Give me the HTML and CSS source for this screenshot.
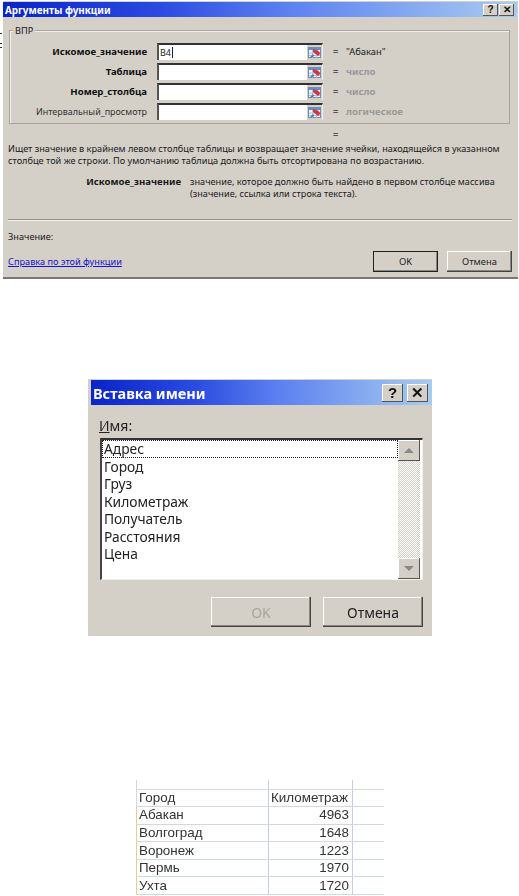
FILE: index.html
```html
<!DOCTYPE html>
<html lang="ru">
<head>
<meta charset="utf-8">
<title>Аргументы функции</title>
<link rel="stylesheet" href="styles.css">
</head>
<body>
<svg class="defs" width="0" height="0" aria-hidden="true">
  <symbol id="ref" viewBox="0 0 15 15">
    <rect x="0" y="0" width="15" height="15" fill="#d4d0c8"/>
    <rect x="1.5" y="2.5" width="12" height="10" fill="#eef4fa" stroke="#6f8fb5"/>
    <rect x="2" y="3" width="11" height="2" fill="#5f8fd0"/>
    <path d="M2 8h11M2 10.5h11M5.5 5v8M9.5 5v8" stroke="#a8c4dc" fill="none"/>
    <path d="M6 4l5 1.5 2.5 3-2.5 2.500-5-4z" fill="#d8363c"/>
    <path d="M3 12l3-3 1.500 1.500-2.500 2.500z" fill="#5f7fb5"/>
  </symbol>
</svg>
<main class="page">
  <section class="dlg dlg-args">
    <header class="title title-args">
      <span>Аргументы функции</span>
      <span class="caps caps-args"><b class="cap">?</b><b class="cap">✕</b></span>
    </header>
    <div class="group">
      <span class="legend">ВПР</span>
      <div class="arg"><label class="req">Искомое_значение</label><div class="field"><span class="val">B4<i class="caret"></i></span><svg class="refbtn"><use href="#ref"/></svg></div><span class="eq">=</span><span class="res">"Абакан"</span></div>
      <div class="arg"><label class="req">Таблица</label><div class="field"><span class="val"></span><svg class="refbtn"><use href="#ref"/></svg></div><span class="eq">=</span><span class="res hint">число</span></div>
      <div class="arg"><label class="req">Номер_столбца</label><div class="field"><span class="val"></span><svg class="refbtn"><use href="#ref"/></svg></div><span class="eq">=</span><span class="res hint">число</span></div>
      <div class="arg"><label>Интервальный_просмотр</label><div class="field"><span class="val"></span><svg class="refbtn"><use href="#ref"/></svg></div><span class="eq">=</span><span class="res hint">логическое</span></div>
    </div>
    <div class="total-eq">=</div>
    <p class="desc">Ищет значение в крайнем левом столбце таблицы и возвращает значение ячейки, находящейся в указанном<br>столбце той же строки. По умолчанию таблица должна быть отсортирована по возрастанию.</p>
    <div class="argdesc">
      <b>Искомое_значение</b>
      <p>значение, которое должно быть найдено в первом столбце массива<br>(значение, ссылка или строка текста).</p>
    </div>
    <hr class="rule">
    <div class="value-line">Значение:</div>
    <footer class="foot-args">
      <a class="help" href="#">Справка по этой функции</a>
      <button class="btn btn-args btn-default" type="button">OK</button>
      <button class="btn btn-args" type="button">Отмена</button>
    </footer>
  </section>

  <section class="dlg dlg-name">
    <header class="title title-name">
      <span>Вставка имени</span>
      <span class="caps caps-name"><b class="cap">?</b><b class="cap">✕</b></span>
    </header>
    <div class="name-label"><u>И</u>мя:</div>
    <div class="listbox">
      <ul class="items">
        <li class="focus">Адрес</li>
        <li>Город</li>
        <li>Груз</li>
        <li>Километраж</li>
        <li>Получатель</li>
        <li>Расстояния</li>
        <li>Цена</li>
      </ul>
      <div class="scroll">
        <span class="sbtn"><i class="tri up"></i></span>
        <span class="strack"></span>
        <span class="sbtn"><i class="tri down"></i></span>
      </div>
    </div>
    <footer class="foot-name">
      <button class="btn btn-name btn-off" type="button">OK</button>
      <button class="btn btn-name" type="button">Отмена</button>
    </footer>
  </section>

  <table class="sheet">
    <tr class="r-top"><td></td><td></td><td></td></tr>
    <tr><td>Город</td><td>Километраж</td><td></td></tr>
    <tr><td>Абакан</td><td class="n">4963</td><td></td></tr>
    <tr><td>Волгоград</td><td class="n">1648</td><td></td></tr>
    <tr><td>Воронеж</td><td class="n">1223</td><td></td></tr>
    <tr><td>Пермь</td><td class="n">1970</td><td></td></tr>
    <tr><td>Ухта</td><td class="n">1720</td><td></td></tr>
  </table>
</main>
</body>
</html>
```

FILE: styles.css
```css
html, body { margin: 0; padding: 0; background: #fff; }
body { width: 519px; height: 896px; overflow: hidden; font-family: "Noto Sans", "Open Sans", sans-serif; color: #1a1a1a; }
.defs { position: absolute; }
.page { display: flex; flex-direction: column; filter: blur(0.35px); }

.dlg { background: #d4d0c8; box-sizing: border-box; display: flex; flex-direction: column; }
.title { display: flex; align-items: center; justify-content: space-between; color: #fff; font-weight: 700;
  background: linear-gradient(90deg, #0a24c8 0%, #2a4ae0 30%, #5c80f0 55%, #a8ccf0 100%); }
.caps { display: flex; }
.cap { display: flex; align-items: center; justify-content: center; background: #d4d0c8; color: #111; font-weight: 700; font-family: "Liberation Sans", sans-serif;
  box-shadow: inset -1px -1px 0 #555, inset 1px 1px 0 #fff; }

/* Function arguments dialog */
.dlg-args { position: relative; width: 515px; height: 278px; margin: 1px 0 0 3px; padding: 1px 1px 0 0; border-bottom: 2px solid #777; font-size: 9.16px; }
.dlg-args::before { content: ""; position: absolute; left: -3px; top: 32px; width: 2px; height: 1px; background: #333; box-shadow: 0 10px 0 #333, 0 14px 0 #333; }
.title-args { height: 15px; padding: 0 3px 0 2px; font-size: 9.9px; }
.caps-args { gap: 1px; }
.cap { width: 15px; height: 12px; font-size: 10px; }
.group { position: relative; box-sizing: border-box; width: 501px; height: 94px; margin: 13px 0 0 6px; padding: 12px 0 0 0;
  border: 1px solid #a8a59e; box-shadow: inset 1px 1px 0 #f2f0ea; display: flex; flex-direction: column; gap: 3px; }
.legend { position: absolute; top: -6px; left: 3px; padding: 0 2px; background: #d4d0c8; line-height: 11px; }
.arg { display: grid; grid-template-columns: 147px 166px 23px 1fr; align-items: center; height: 17px; }
.arg label { text-align: right; padding-right: 10px; white-space: nowrap; font-size: 8.96px; color: #333; }
.arg label.req { font-weight: 700; font-size: 9.6px; color: #111; }
.field { width: 166px; height: 17px; box-sizing: border-box; background: #fff; border-top: 2px solid #333; border-left: 2px solid #555; border-right: 1px solid #eee; display: flex; align-items: center; justify-content: space-between; }
.val { display: flex; align-items: center; font-size: 9px; padding-left: 1px; line-height: 13px; }
.caret { width: 1px; height: 11px; margin-left: 1px; background: #222; }
.refbtn { width: 15px; height: 15px; flex: none; }
.eq { padding-left: 10px; font-weight: 700; color: #555; }
.res { white-space: nowrap; font-size: 9.4px; }
.hint { color: #999; font-weight: 700; font-size: 9.6px; }
.total-eq { margin: 5px 0 0 330px; font-weight: 700; color: #555; line-height: 12px; height: 12px; }
.desc { margin: 2px 0 0 5px; line-height: 11.5px; white-space: nowrap; }
.argdesc { display: flex; margin: 10px 0 0 5px; }
.argdesc b { width: 173px; text-align: right; font-size: 9.6px; line-height: 12px; white-space: nowrap; }
.argdesc p { margin: 0 0 0 9px; line-height: 11.5px; white-space: nowrap; }
.rule { width: 504px; height: 0; margin: 20px 0 0 5px; border: 0; border-top: 1px solid #8f8c85; border-bottom: 1px solid #f4f2ec; }
.value-line { margin: 10px 0 0 5px; line-height: 12px; }
.foot-args { display: flex; align-items: center; margin-top: 8px; padding-left: 5px; }
.help { color: #1414c8; text-decoration: underline; margin-right: auto; font-size: 9.2px; }
.btn { font-family: inherit; color: #222; background: #d4d0c8; border: 0; padding: 0; box-shadow: inset -1px -1px 0 #444, inset -2px -2px 0 #8a8780, inset 1px 1px 0 #fff; }
.btn-args { width: 65px; height: 21px; font-size: 9.4px; margin-right: 5px; margin-left: 4px; }
.btn-default { outline: 1px solid #222; outline-offset: -1px; }

/* Insert name dialog */
.dlg-name { width: 344px; height: 257px; margin: 100px 0 0 88px; padding: 1px 0 0 3px; }
.title-name { height: 25px; padding: 0 4px 0 2px; font-size: 14.5px; }
.caps-name { gap: 4px; }
.caps-name .cap { width: 21px; height: 18px; font-size: 15px; }
.name-label { font-size: 14px; line-height: 18px; margin: 12px 0 0 8px; color: #222; }
.listbox { display: flex; box-sizing: border-box; width: 323px; height: 142px; margin: 3px 0 0 9px; background: #fff;
  border-top: 2px solid #333; border-left: 2px solid #444; border-right: 1px solid #f4f2ec; border-bottom: 1px solid #f4f2ec; padding-right: 2px; }
.items { flex: 1; list-style: none; margin: 0; padding: 0; font-size: 13.8px; line-height: 17.5px; color: #222; }
.items li { padding-left: 2px; }
.focus { outline: 1px dotted #222; outline-offset: -1px; }
.scroll { width: 22px; display: flex; flex-direction: column; background: repeating-conic-gradient(#d4d0c8 0 25%, #fff 0 50%) 0 0 / 2px 2px; }
.sbtn { height: 21px; display: flex; align-items: center; justify-content: center; background: #d4d0c8; box-shadow: inset -1px -1px 0 #555, inset 1px 1px 0 #fff; }
.strack { flex: 1; }
.tri { width: 0; height: 0; border-left: 5px solid transparent; border-right: 5px solid transparent; }
.up { border-bottom: 5px solid #888; }
.down { border-top: 5px solid #888; }
.foot-name { display: flex; justify-content: flex-end; gap: 12px; margin: 17px 9px 0 0; }
.btn-name { width: 100px; height: 30px; font-size: 14px; }
.btn-off { color: #a8a59e; }

/* Spreadsheet fragment */
.sheet { border-collapse: collapse; margin: 144px 0 0 136px; font-family: "Liberation Sans", sans-serif; font-size: 13.4px; color: #333; table-layout: fixed; width: 248px; }
.sheet td { height: 17.6px; padding: 0 3px 0 2px; box-sizing: border-box; border-bottom: 1px solid #d0d7e5; border-right: 1px solid #c5cede; white-space: nowrap; line-height: 14px; }
.sheet td:nth-child(1) { width: 132px; border-left: 1px solid #d0d7e5; }
.sheet td:nth-child(2) { width: 84px; }
.sheet td:nth-child(3) { border-right: 0; }
.sheet tr:nth-child(n+3) td:first-child { border-left: 1px solid #f2c88e; }
.r-top td { height: 9px; }
.n { text-align: right; }
```
